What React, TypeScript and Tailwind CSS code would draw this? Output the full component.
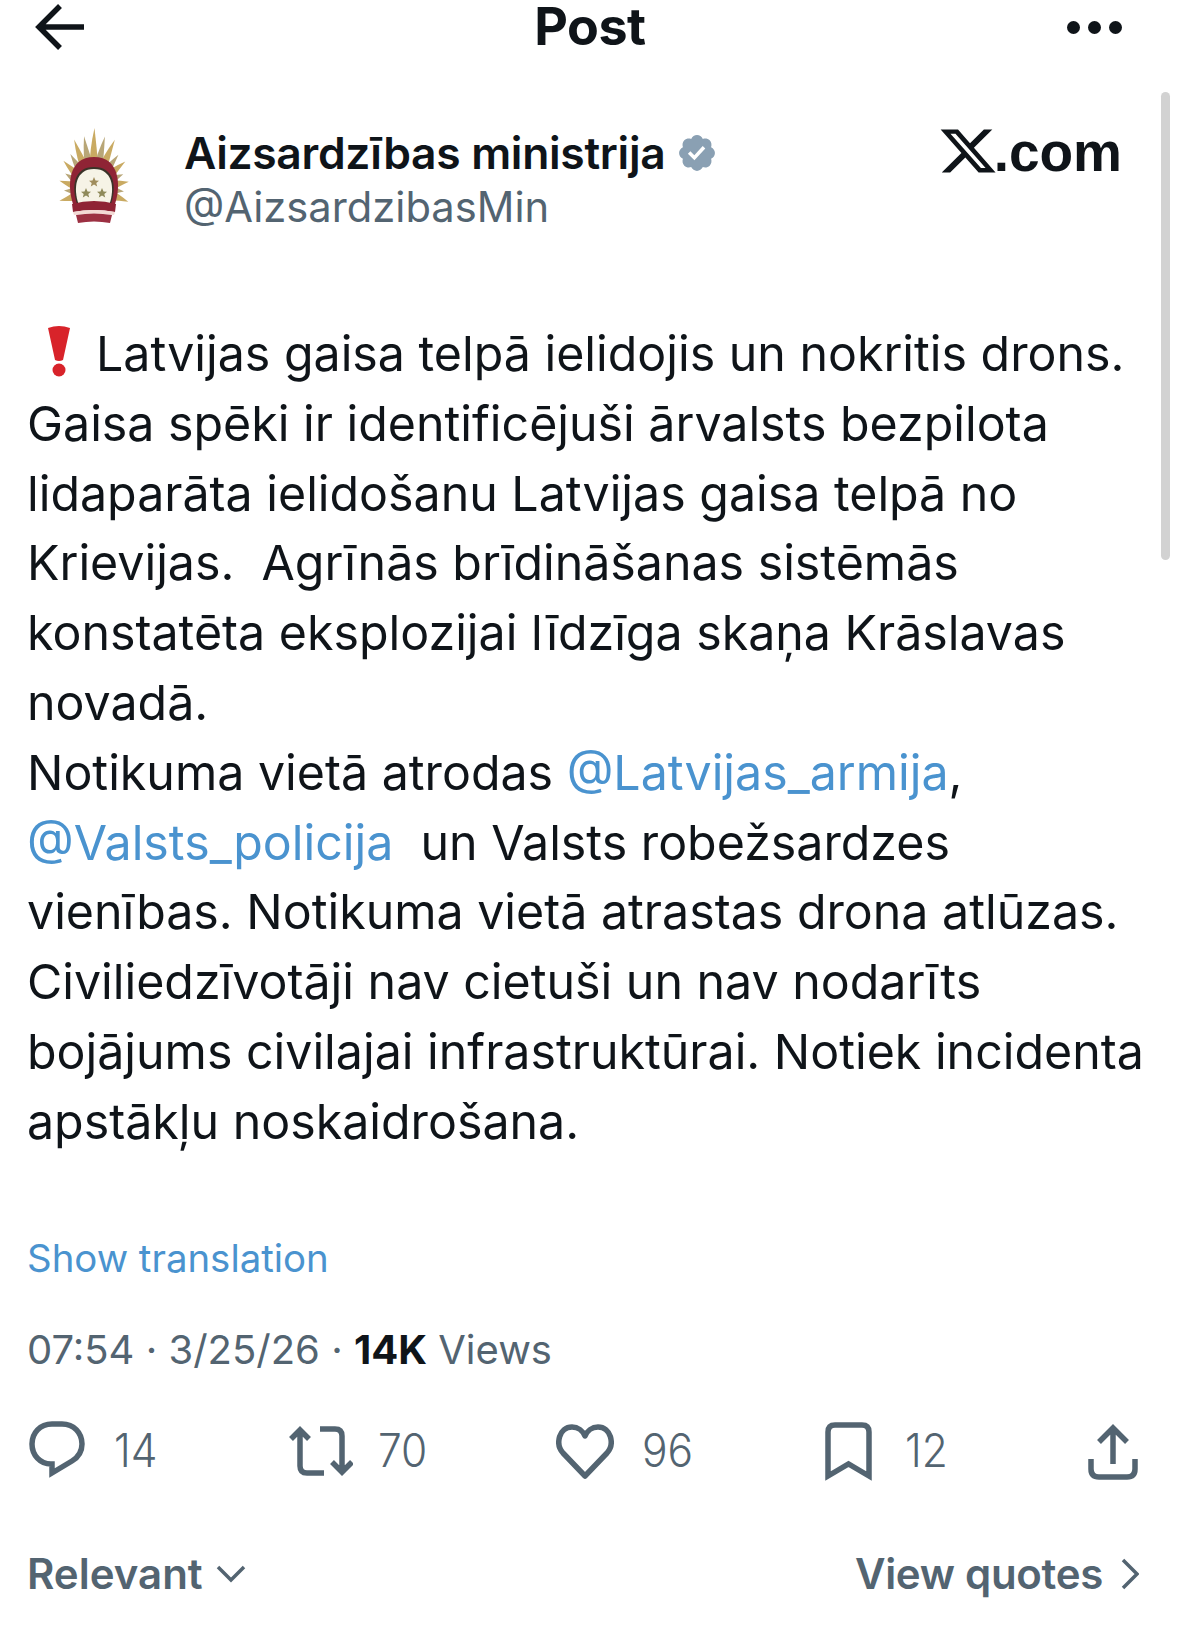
import React from 'react'

const ICON = '#536471'

const Mention = ({ children }: { children: React.ReactNode }) => (
  <span className="text-[#4a93cf]">{children}</span>
)

const Logo = () => {
  // plumes sit on an ellipse round the arch, longest at the top
  const angles = [-108, -92, -76, -61, -47, -34, -22, -11, 0, 11, 22, 34, 47, 61, 76, 92, 108]
  return (
    <svg width="70" height="96" viewBox="-3 0 70 96" className="-ml-[3px] -mr-[3px]">
      {angles.map((a, i) => {
        const r = (a * Math.PI) / 180
        const len = 1 / Math.sqrt((Math.sin(r) / 35) ** 2 + (Math.cos(r) / 62) ** 2) - (i % 2 ? 5 : 0)
        return (
          <path
            key={a}
            d={`M-4.5 -20 Q-4.5 ${-len * 0.65} 0.5 ${-len} Q3 ${-len * 0.65} 4.5 -20 Z`}
            fill={i % 2 ? '#b8a677' : '#c9aa62'}
            transform={`translate(32 62) rotate(${a})`}
          />
        )
      })}
      <path d="M11 76 C5 58 6 29 32 29 C58 29 59 58 53 76 Z" fill="#8f2435" />
      <path d="M15 76 C9 58 12 39 32 39 C52 39 55 58 49 76 Z" fill="#3a3328" />
      <path d="M16.5 76 C11 60 13.5 41 32 41 C50.5 41 53 60 47.5 76 Z" fill="#f6f3e6" />
      <path d="M32 49 l1.5 3.5 3.5 .3 -2.7 2.3 .9 3.5 -3.2 -2 -3.2 2 .9 -3.5 -2.7 -2.3 3.5 -.3z" fill="#a08d5c" />
      <path d="M24 60 l1.5 3.5 3.5 .3 -2.7 2.3 .9 3.5 -3.2 -2 -3.2 2 .9 -3.5 -2.7 -2.3 3.5 -.3z" fill="#8f8a5a" />
      <path d="M40 60 l1.5 3.5 3.5 .3 -2.7 2.3 .9 3.5 -3.2 -2 -3.2 2 .9 -3.5 -2.7 -2.3 3.5 -.3z" fill="#8f8a5a" />
      <path d="M10 76 Q32 70 54 76 L53 84 Q32 80 11 84 Z" fill="#8f2435" />
      <path d="M11 84 Q32 80 53 84 L52 87 Q32 84 12 87 Z" fill="#f3d9d4" />
      <path d="M14 87 Q32 84 50 87 L48 95 Q32 92 16 95 Z" fill="#9c3042" />
    </svg>
  )
}

const Stat = ({ width, icon, value, gap }: { width: string; icon: React.ReactNode; value: string; gap: string }) => (
  <div className={`flex items-center ${width} ${gap}`}>
    {icon}
    <span className="font-light text-[42.5px] leading-none text-[#536471] scale-y-[1.08]">{value}</span>
  </div>
)

const body: React.ReactNode[] = [
  <>
    <svg width="24" height="52" viewBox="0 0 24 52" className="inline-block align-[-6px] ml-[20px] mr-[25px]">
      <path d="M1 3 Q12 -1 23 3 L16 35 Q12 37 8 35 Z" fill="#d8232a" />
      <circle cx="12" cy="45" r="6.5" fill="#d8232a" />
    </svg>
    Latvijas gaisa telpā ielidojis un nokritis drons.
  </>,
  'Gaisa spēki ir identificējuši ārvalsts bezpilota',
  'lidaparāta ielidošanu Latvijas gaisa telpā no',
  'Krievijas.  Agrīnās brīdināšanas sistēmās',
  'konstatēta eksplozijai līdzīga skaņa Krāslavas',
  'novadā.',
  <>Notikuma vietā atrodas <Mention>@Latvijas_armija</Mention>,</>,
  <><Mention>@Valsts_policija</Mention>  un Valsts robežsardzes</>,
  'vienības. Notikuma vietā atrastas drona atlūzas.',
  'Civiliedzīvotāji nav cietuši un nav nodarīts',
  'bojājums civilajai infrastruktūrai. Notiek incidenta',
  'apstākļu noskaidrošana.',
]

export default function App() {
  return (
    <div className="relative w-[1179px] h-[1645px] overflow-hidden bg-white font-['Inter',sans-serif] text-[#0f1419]">
      {/* scroll bar */}
      <div className="absolute left-[1161px] top-[92px] w-[9px] h-[468px] rounded-full bg-[#d2d2d2]" />

      {/* top bar */}
      <header className="flex items-center justify-between h-[54px] pl-[35px] pr-[57px]">
        <svg width="50" height="50" viewBox="0 0 50 50">
          <path d="M49 25 H4 M25 4 L4 25 L25 46" fill="none" stroke="#0f1419" strokeWidth="5.5" />
        </svg>
        <h1 className="text-[52px] font-bold leading-[54px] tracking-[-0.5px] ml-[28px]">Post</h1>
        <div className="flex gap-[8px]">
          <span className="w-[13px] h-[13px] rounded-full bg-[#0f1419]" />
          <span className="w-[13px] h-[13px] rounded-full bg-[#0f1419]" />
          <span className="w-[13px] h-[13px] rounded-full bg-[#0f1419]" />
        </div>
      </header>

      {/* author */}
      <div className="flex items-start justify-between mt-[74px] pl-[62px] pr-[57px]">
        <div className="flex items-start gap-[58px]">
          <Logo />
          <div className="-mt-[2px]">
            <div className="flex items-center gap-[11px] text-[44.4px] font-semibold leading-[54px] tracking-[-0.3px]">
              Aizsardzības ministrija
              <svg width="42" height="42" viewBox="0 0 24 24" fill="#8aa0b3">
                <path d="M22.25 12c0-1.43-.88-2.67-2.19-3.34.46-1.39.2-2.9-.81-3.91s-2.52-1.27-3.91-.81c-.66-1.31-1.91-2.19-3.34-2.19s-2.67.88-3.33 2.19c-1.4-.46-2.91-.2-3.92.81s-1.26 2.52-.8 3.91c-1.31.67-2.2 1.91-2.2 3.34s.89 2.67 2.2 3.34c-.46 1.39-.21 2.9.8 3.91s2.52 1.26 3.91.81c.67 1.31 1.91 2.19 3.34 2.19s2.68-.88 3.34-2.19c1.39.45 2.9.2 3.91-.81s1.27-2.52.81-3.91c1.31-.67 2.19-1.91 2.19-3.34zm-11.71 4.2L6.8 12.46l1.41-1.42 2.26 2.26 4.8-5.23 1.47 1.36-6.2 6.77z" />
              </svg>
            </div>
            <div className="text-[41.7px] leading-[54px] text-[#536471]">@AizsardzibasMin</div>
          </div>
        </div>
        <div className="flex items-end -mt-[1px]">
          <svg width="56" height="44" viewBox="1 2 22 20" preserveAspectRatio="none" fill="#0f1419">
            <path d="M18.244 2.25h3.308l-7.227 8.26 8.502 11.24H16.17l-5.214-6.817L4.99 21.75H1.68l7.73-8.835L1.254 2.25H8.08l4.713 6.231zm-1.161 17.52h1.833L7.084 4.126H5.117z" />
          </svg>
          <span className="font-['Liberation_Sans'] font-bold text-[55px] leading-[50px] -mb-[4px] -ml-[2px]">.com</span>
        </div>
      </div>

      {/* tweet text */}
      <div className="mt-[85px] pl-[27px] text-[48.3px] leading-[69.8px] whitespace-pre">
        {body.map((line, i) => (
          <div key={i}>{line}</div>
        ))}
      </div>

      <div className="mt-[76px] pl-[27px] text-[38.4px] leading-[50px] text-[#4a93cf]">Show translation</div>

      <div className="mt-[42px] pl-[27px] text-[40px] leading-[50px] text-[#536471]">
        07:54 · 3/25/26 · <span className="font-bold text-[#0f1419]">14K</span> Views
      </div>

      {/* actions */}
      <div className="flex items-center mt-[46px] pl-[29px]">
        <Stat
          width="w-[260px]"
          gap="gap-[29px]"
          value="14"
          icon={
            <svg width="56" height="61" viewBox="0 0 56 61">
              <path d="M23 3 H33 C45 3 53 12 53 23 C53 32 48 37 43 40 L23 52 V43 H22 C11 43 3 34 3 23 C3 12 11 3 23 3 Z" fill="none" stroke={ICON} strokeWidth="5.5" />
            </svg>
          }
        />
        <Stat
          width="w-[267px]"
          gap="gap-[25px]"
          value="70"
          icon={
            <svg width="64" height="50" viewBox="0 0 64 50" fill="none" stroke={ICON} strokeWidth="5.5">
              <path d="M11 4 V40 Q11 47 18 47 H35 M2 13 L11 4 L20 13" />
              <path d="M31 3 H46 Q53 3 53 10 V46 M43 36 L53 46 L63 36" />
            </svg>
          }
        />
        <Stat
          width="w-[269px]"
          gap="gap-[28px]"
          value="96"
          icon={
            <svg width="58" height="58" viewBox="0 0 58 58">
              <path d="M29 54 L7 31 C-1 22 3 5 16 5 C22 5 27 9 29 14 C31 9 36 5 42 5 C55 5 59 22 51 31 Z" fill="none" stroke={ICON} strokeWidth="5.5" strokeLinejoin="round" />
            </svg>
          }
        />
        <Stat
          width="w-[263px]"
          gap="gap-[33px]"
          value="12"
          icon={
            <svg width="47" height="59" viewBox="0 0 47 59">
              <path d="M3 54 V10 Q3 3 10 3 H37 Q44 3 44 10 V54 L23.5 42 Z" fill="none" stroke={ICON} strokeWidth="5.5" />
            </svg>
          }
        />
        <svg width="50" height="57" viewBox="0 0 50 57" fill="none" stroke={ICON} strokeWidth="5.5">
          <path d="M25 5 V41 M11 19 L25 5 L39 19" />
          <path d="M3 36 V46 Q3 54 11 54 H39 Q47 54 47 46 V36" />
        </svg>
      </div>

      {/* footer */}
      <div className="flex items-center justify-between mt-[67px] pl-[27px] pr-[40px] text-[42px] leading-[50px] font-semibold text-[#536471]">
        <div className="flex items-center gap-[13px]">
          Relevant
          <svg width="30" height="18" viewBox="0 0 30 18" fill="none" stroke={ICON} strokeWidth="3.5">
            <path d="M2 2 L15 15 L28 2" />
          </svg>
        </div>
        <div className="flex items-center gap-[18px] tracking-[-0.3px]">
          View quotes
          <svg width="18" height="32" viewBox="0 0 18 32" fill="none" stroke={ICON} strokeWidth="3.5">
            <path d="M2 2 L16 16 L2 30" />
          </svg>
        </div>
      </div>
    </div>
  )
}
